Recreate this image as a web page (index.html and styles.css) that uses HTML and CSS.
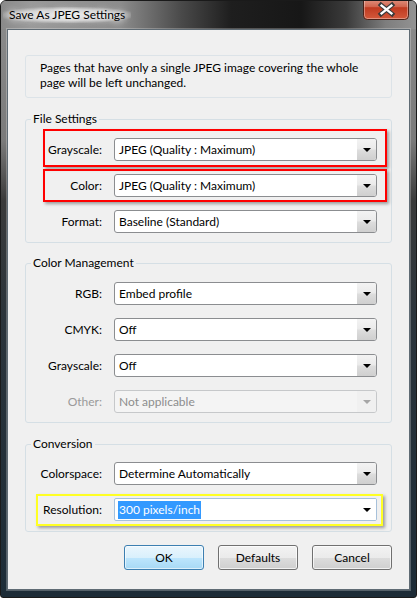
FILE: index.html
```html
<!DOCTYPE html>
<html>
<head>
<meta charset="utf-8">
<link rel="stylesheet" href="styles.css">
</head>
<body>
<div class="window">
  <div class="titlebar">
    <span class="title">Save As JPEG Settings</span>
    <div class="close">
      <svg width="46" height="20" viewBox="0 0 46 20">
        <defs>
          <linearGradient id="cg" x1="0" y1="0" x2="0" y2="1">
            <stop offset="0" stop-color="#e6a797"/>
            <stop offset="0.45" stop-color="#d2664f"/>
            <stop offset="0.5" stop-color="#c03a20"/>
            <stop offset="1" stop-color="#d45a3c"/>
          </linearGradient>
        </defs>
        <rect x="0.5" y="-4" width="45" height="23.5" rx="4" fill="url(#cg)" stroke="#4a2219"/>
        <rect x="1.5" y="-3" width="43" height="21.5" rx="3" fill="none" stroke="rgba(255,255,255,0.35)"/>
        <path d="M18 5 L29 14 M29 5 L18 14" stroke="#3b3b3b" stroke-width="4.6" stroke-linecap="square"/>
        <path d="M18.6 5.6 L28.4 13.4 M28.4 5.6 L18.6 13.4" stroke="#ffffff" stroke-width="2.4" stroke-linecap="square"/>
      </svg>
    </div>
  </div>
  <div class="frame">
    <div class="client">
      <p class="note">Pages that have only a single JPEG image covering the whole<br>page will be left unchanged.</p>

      <fieldset class="group">
        <legend>File Settings</legend>
        <div class="rows">
          <div class="row">
            <span class="mark red mark-a"></span>
            <label>Grayscale:</label>
            <div class="combo"><span class="value">JPEG (Quality : Maximum)</span><span class="drop"><i class="tri"></i></span></div>
          </div>
          <div class="row">
            <span class="mark red mark-b"></span>
            <label>Color:</label>
            <div class="combo"><span class="value">JPEG (Quality : Maximum)</span><span class="drop"><i class="tri"></i></span></div>
          </div>
          <div class="row">
            <label>Format:</label>
            <div class="combo"><span class="value">Baseline (Standard)</span><span class="drop"><i class="tri"></i></span></div>
          </div>
        </div>
      </fieldset>

      <fieldset class="group">
        <legend>Color Management</legend>
        <div class="rows">
          <div class="row">
            <label>RGB:</label>
            <div class="combo"><span class="value">Embed profile</span><span class="drop"><i class="tri"></i></span></div>
          </div>
          <div class="row">
            <label>CMYK:</label>
            <div class="combo"><span class="value">Off</span><span class="drop"><i class="tri"></i></span></div>
          </div>
          <div class="row">
            <label>Grayscale:</label>
            <div class="combo"><span class="value">Off</span><span class="drop"><i class="tri"></i></span></div>
          </div>
          <div class="row disabled">
            <label>Other:</label>
            <div class="combo"><span class="value">Not applicable</span><span class="drop"><i class="tri"></i></span></div>
          </div>
        </div>
      </fieldset>

      <fieldset class="group group-last">
        <legend>Conversion</legend>
        <div class="rows">
          <div class="row">
            <label>Colorspace:</label>
            <div class="combo"><span class="value">Determine Automatically</span><span class="drop"><i class="tri"></i></span></div>
          </div>
          <div class="row">
            <span class="mark yellow mark-c"></span>
            <label>Resolution:</label>
            <div class="combo edit"><span class="value"><span class="sel">300 pixels/inch</span></span><span class="drop"><i class="tri"></i></span></div>
          </div>
        </div>
      </fieldset>

      <div class="buttons">
        <button class="btn default">OK</button>
        <button class="btn">Defaults</button>
        <button class="btn">Cancel</button>
      </div>
    </div>
  </div>
</div>
</body>
</html>
```

FILE: styles.css
```css
* { box-sizing: border-box; }

html, body {
  margin: 0;
  padding: 0;
  background: #ffffff;
}

body {
  font-family: "Lato", "Noto Sans", sans-serif;
  font-size: 12px;
  color: #000;
}

.window {
  width: 417px;
  height: 598px;
  display: flex;
  flex-direction: column;
  border: 1px solid #1a1a1a;
  border-radius: 6px 6px 3px 3px;
  overflow: hidden;
  background: linear-gradient(to bottom, #8d8d8d 0, #7a7a7a 140px, #3a3a3a 200px, #2b343b 320px, #1d2c37 100%);
}

.titlebar {
  height: 28px;
  display: flex;
  align-items: flex-start;
  background: linear-gradient(to right, #8a8a8a 0, #9a9a9a 30px, #8c8c8c 120px, #4a4a4a 180px, #1e1e1e 230px, #171717 300px, #3a3a3a 345px, #7e7e7e 385px, #939393 416px);
}

.title {
  margin: 6px 0 0 2px;
  padding: 0 6px;
  line-height: 16px;
  font-size: 12px;
  color: #000;
  background: radial-gradient(ellipse at center, rgba(235,235,235,0.95) 0, rgba(220,220,220,0.8) 50%, rgba(200,200,200,0) 78%);
  text-shadow: 0 0 6px #fff, 0 0 10px #fff;
}

.close {
  margin-left: auto;
  margin-right: 7px;
  margin-top: -1px;
  width: 46px;
  height: 20px;
}
.close svg { display: block; }

.frame {
  flex: 1;
  display: flex;
  padding: 0 6px 7px 6px;
}

.client {
  flex: 1;
  display: flex;
  flex-direction: column;
  background: #f0f0f0;
  border: 1px solid #5f6b74;
  box-shadow: 0 0 0 1px rgba(255,255,255,0.25);
  padding: 25px 17px 0 17px;
}

.note {
  margin: 0;
  height: 43px;
  border: 1px solid #dce3e8;
  border-radius: 3px;
  padding: 4px 10px 7px 14px;
  line-height: 15px;
}

.group {
  margin: 13px 0 0 0;
  padding: 0;
  border: 1px solid #d5dfe5;
  border-radius: 3px;
  min-width: 0;
}
.group + .group { margin-top: 12px; }
.group.group-last { margin-top: 13px; }

.group legend {
  margin-left: 5px;
  padding: 0 2px;
  line-height: 16px;
  font-size: 12px;
}

.rows {
  display: flex;
  flex-direction: column;
  gap: 13px;
  padding: 11px 0 9px 0;
}
.group-last .rows { padding: 10px 0 10px 0; }

.row {
  position: relative;
  display: grid;
  grid-template-columns: 76px 263px;
  column-gap: 12px;
  height: 23px;
  align-items: center;
}

.row label {
  text-align: right;
  line-height: 23px;
}

.combo {
  position: relative;
  display: flex;
  height: 23px;
  border: 1px solid #8b8d90;
  border-radius: 3px;
  background: #fff;
  overflow: hidden;
}

.combo .value {
  flex: 1;
  padding-left: 4px;
  line-height: 21px;
  white-space: nowrap;
}

.combo .drop {
  width: 19px;
  display: flex;
  align-items: center;
  justify-content: center;
  background: linear-gradient(to bottom, #f3f3f3 0, #ebebeb 45%, #dcdcdc 55%, #cfcfcf 100%);
}

.tri {
  display: block;
  width: 0;
  height: 0;
  border-left: 4px solid transparent;
  border-right: 4px solid transparent;
  border-top: 4px solid #000;
  margin-left: 1px;
}

.row.disabled label { color: #9a9a9a; }
.row.disabled .combo {
  background: #f4f4f4;
  border-color: #c6c8ca;
}
.row.disabled .value { color: #8d8d8d; }
.row.disabled .drop { background: #f0f0f0; }
.row.disabled .tri { border-top-color: #a6a6a6; }

.combo.edit {
  border-color: #a7c1db;
  border-radius: 2px;
}
.combo.edit .drop { background: #fff; }
.combo.edit .value { padding-left: 3px; }

.sel {
  background: #3399ff;
  color: #fff;
  padding: 1px 1px 2px 1px;
}

.mark {
  position: absolute;
  border-style: solid;
  border-width: 2px;
  box-shadow: 2px 2px 3px rgba(0,0,0,0.35);
  pointer-events: none;
}
.mark.red { border-color: #ff0000; }
.mark.yellow { border-color: #ffff24; }
.mark-a { left: 17px; top: -9px; width: 344px; height: 38px; }
.mark-b { left: 17px; top: -5px; width: 344px; height: 33px; }
.mark-c { left: 10px; top: -4px; width: 347px; height: 32px; }

.buttons {
  display: flex;
  justify-content: flex-end;
  gap: 14px;
  margin-top: 13px;
}

.btn {
  width: 80px;
  height: 25px;
  font-family: inherit;
  font-size: 12px;
  color: #000;
  border: 1px solid #707070;
  border-radius: 3px;
  background: linear-gradient(to bottom, #f2f2f2 0, #ebebeb 50%, #dddddd 50%, #cfcfcf 100%);
  box-shadow: inset 0 0 0 1px rgba(255,255,255,0.7);
  padding: 0;
}

.btn.default {
  border-color: #3c7fb1;
  background: linear-gradient(to bottom, #eaf6fd 0, #d9f0fc 50%, #bee6fd 50%, #a7d9f5 100%);
  box-shadow: inset 0 0 0 1px rgba(255,255,255,0.6);
}
```
